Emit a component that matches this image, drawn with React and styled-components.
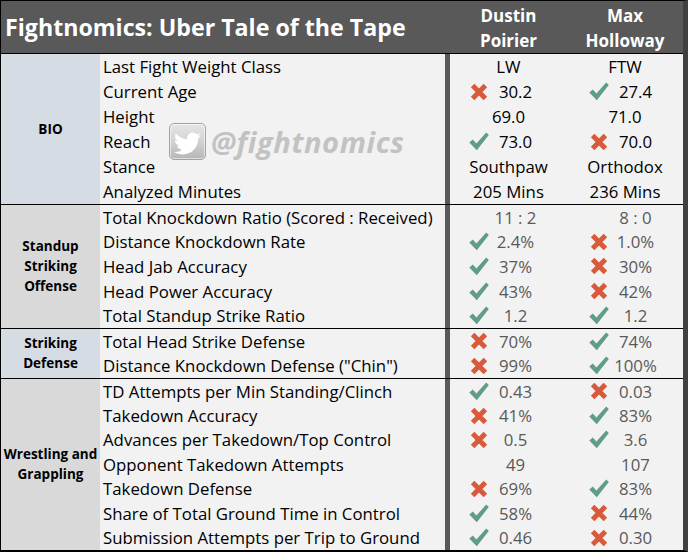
import React from 'react';
import styled, { createGlobalStyle } from 'styled-components';

const GlobalStyle = createGlobalStyle`
  html, body { margin: 0; padding: 0; background: #ffffff; }
  body { font-family: "Open Sans", "Liberation Sans", sans-serif; }
`;

const COLS = '99px 345px 5px 117px 116px';

const Sheet = styled.div`
  position: relative;
  width: 688px;
  box-sizing: border-box;
  border-top: 1px solid #000;
  border-left: 1px solid #000;
  border-bottom: 2px solid #000;
  border-right: 5px solid #404040;
  background: #f2f2f2;
`;

const Header = styled.div`
  display: grid;
  grid-template-columns: ${COLS};
  height: 52px;
  background: #595959;
  border-bottom: 1px solid #000;
  color: #ffffff;
`;

const Title = styled.div`
  grid-column: 1 / 4;
  display: flex;
  align-items: center;
  padding-left: 4px;
  font-weight: 700;
  font-size: 23.2px;
  white-space: nowrap;
`;

const PlayerName = styled.div`
  display: flex;
  flex-direction: column;
  align-items: center;
  justify-content: center;
  padding-top: 2px;
  font-weight: 700;
  font-size: 17px;
  line-height: 25px;
`;

const Section = styled.div`
  position: relative;
  display: grid;
  grid-template-columns: ${COLS};
  grid-auto-rows: ${p => p.$rowH}px;
  border-bottom: ${p => (p.$last ? 'none' : '1px solid #000')};
`;

const Category = styled.div`
  grid-column: 1;
  grid-row: 1 / span ${p => p.$span};
  background: ${p => p.$bg};
  display: flex;
  flex-direction: column;
  align-items: center;
  justify-content: center;
  font-weight: 700;
  font-size: 13.5px;
  line-height: 20px;
  color: #000;
  text-align: center;
`;

const Divider = styled.div`
  grid-column: 3;
  grid-row: 1 / span ${p => p.$span};
  background: #595959;
`;

const Label = styled.div`
  grid-column: 2;
  display: flex;
  align-items: center;
  padding-left: 3px;
  font-size: 16.8px;
  color: #000;
  white-space: nowrap;
`;

const Value = styled.div`
  grid-column: ${p => (p.$side === 'a' ? 4 : 5)};
  display: flex;
  align-items: center;
  justify-content: center;
  font-size: 16.8px;
  color: ${p => p.$tone};
  white-space: nowrap;
  padding-left: ${p => (p.$iconLayout ? (p.$side === 'a' ? 19 : 22) : 0)}px;
  padding-right: ${p => (p.$iconLayout ? (p.$side === 'a' ? 25 : 21) : 0)}px;
`;

const IconSlot = styled.span`
  width: 20px;
  height: 20px;
  flex: none;
  display: flex;
  align-items: center;
  justify-content: center;
`;

const ValueText = styled.span`
  flex: 1;
  text-align: center;
`;

const Watermark = styled.div`
  position: absolute;
  left: 168px;
  top: 69px;
  display: flex;
  align-items: center;
  gap: 5px;
  pointer-events: none;
`;

const BirdBox = styled.div`
  width: 37px;
  height: 37px;
  box-sizing: border-box;
  border-radius: 5px;
  border: 1px solid #a3a3a3;
  box-shadow: inset 0 0 0 1px rgba(255, 255, 255, 0.55);
  background: linear-gradient(#e6e6e6, #d2d2d2 50%, #b6b6b6);
  display: flex;
  align-items: center;
  justify-content: center;
  overflow: hidden;
`;

const Handle = styled.span`
  font-weight: 700;
  font-style: italic;
  font-size: 29px;
  line-height: 37px;
  color: #c2c2c2;
  letter-spacing: 0.6px;
`;

const Check = () => (
  <svg width="20" height="19" viewBox="0 0 20 19">
    <polygon points="0.3,10.5 3.8,7.6 7.4,11.6 17.2,0.6 19.8,3 7.8,18.3" fill="#5f9c89" />
  </svg>
);

const Cross = () => (
  <svg width="18" height="18" viewBox="0 0 18 18">
    <path d="M2.6 2.6 L15.4 15.4 M15.4 2.6 L2.6 15.4" stroke="#d95a3b" strokeWidth="5" strokeLinecap="butt" />
  </svg>
);

const Bird = () => (
  <svg width="27" height="23" viewBox="0 0 24 20" style={{ marginTop: 4, marginLeft: -1 }}>
    <path
      fill="#ffffff"
      d="M23.953 2.57a10 10 0 01-2.825.775 4.958 4.958 0 002.163-2.723c-.951.555-2.005.959-3.127 1.184a4.92 4.92 0 00-8.384 4.482C7.69 6.095 4.067 4.13 1.64 1.162a4.822 4.822 0 00-.666 2.475c0 1.71.87 3.213 2.188 4.096a4.904 4.904 0 01-2.228-.616v.06a4.923 4.923 0 003.946 4.827 4.996 4.996 0 01-2.212.085 4.936 4.936 0 004.604 3.417 9.867 9.867 0 01-6.102 2.105c-.39 0-.779-.023-1.170-.067a13.995 13.995 0 007.557 2.209c9.053 0 13.998-7.496 13.998-13.985 0-.21 0-.42-.015-.63A9.935 9.935 0 0024 2.59z"
    />
  </svg>
);

const sections = [
  {
    key: 'bio',
    name: ['BIO'],
    bg: '#d6dce4',
    tone: '#000000',
    iconSet: false,
    rowH: 25,
    rows: [
      ['Last Fight Weight Class', [null, 'LW'], [null, 'FTW']],
      ['Current Age', ['x', '30.2'], ['c', '27.4']],
      ['Height', [null, '69.0'], [null, '71.0']],
      ['Reach', ['c', '73.0'], ['x', '70.0']],
      ['Stance', [null, 'Southpaw'], [null, 'Orthodox']],
      ['Analyzed Minutes', [null, '205 Mins'], [null, '236 Mins']],
    ],
  },
  {
    key: 'standup',
    name: ['Standup', 'Striking', 'Offense'],
    bg: '#d9d9d9',
    tone: '#595959',
    iconSet: true,
    rowH: 24.6,
    rows: [
      ['Total Knockdown Ratio (Scored : Received)', [null, '11 : 2'], [null, '8 : 0']],
      ['Distance Knockdown Rate', ['c', '2.4%'], ['x', '1.0%']],
      ['Head Jab Accuracy', ['c', '37%'], ['x', '30%']],
      ['Head Power Accuracy', ['c', '43%'], ['x', '42%']],
      ['Total Standup Strike Ratio', ['c', '1.2'], ['c', '1.2']],
    ],
  },
  {
    key: 'defense',
    name: ['Striking', 'Defense'],
    bg: '#d6dce4',
    tone: '#595959',
    iconSet: true,
    rowH: 24.5,
    rows: [
      ['Total Head Strike Defense', ['x', '70%'], ['c', '74%']],
      ['Distance Knockdown Defense ("Chin")', ['x', '99%'], ['c', '100%']],
    ],
  },
  {
    key: 'wrestling',
    name: ['Wrestling and', 'Grappling'],
    bg: '#d9d9d9',
    tone: '#595959',
    iconSet: true,
    rowH: 24.4,
    rows: [
      ['TD Attempts per Min Standing/Clinch', ['c', '0.43'], ['x', '0.03']],
      ['Takedown Accuracy', ['x', '41%'], ['c', '83%']],
      ['Advances per Takedown/Top Control', ['x', '0.5'], ['c', '3.6']],
      ['Opponent Takedown Attempts', [null, '49'], [null, '107']],
      ['Takedown Defense', ['x', '69%'], ['c', '83%']],
      ['Share of Total Ground Time in Control', ['c', '58%'], ['x', '44%']],
      ['Submission Attempts per Trip to Ground', ['c', '0.46'], ['x', '0.30']],
    ],
  },
];

const Cell = ({ side, data, tone, iconSet }) => {
  const [icon, text] = data;
  const iconLayout = iconSet || icon !== null;
  return (
    <Value $side={side} $tone={tone} $iconLayout={iconLayout}>
      {iconLayout ? (
        <>
          <IconSlot>{icon === 'c' ? <Check /> : icon === 'x' ? <Cross /> : null}</IconSlot>
          <ValueText>{text}</ValueText>
        </>
      ) : (
        text
      )}
    </Value>
  );
};

export default function App() {
  return (
    <>
      <GlobalStyle />
      <Sheet>
        <Header>
          <Title>Fightnomics: Uber Tale of the Tape</Title>
          <PlayerName>
            <span>Dustin</span>
            <span>Poirier</span>
          </PlayerName>
          <PlayerName>
            <span>Max</span>
            <span>Holloway</span>
          </PlayerName>
        </Header>
        {sections.map((s, si) => (
          <Section key={s.key} $rowH={s.rowH} $last={si === sections.length - 1}>
            <Category $bg={s.bg} $span={s.rows.length}>
              {s.name.map(n => (
                <span key={n}>{n}</span>
              ))}
            </Category>
            <Divider $span={s.rows.length} />
            {s.rows.map(([label, a, b]) => (
              <React.Fragment key={label}>
                <Label>{label}</Label>
                <Cell side="a" data={a} tone={s.tone} iconSet={s.iconSet} />
                <Cell side="b" data={b} tone={s.tone} iconSet={s.iconSet} />
              </React.Fragment>
            ))}
            {si === 0 && (
              <Watermark>
                <BirdBox>
                  <Bird />
                </BirdBox>
                <Handle>@fightnomics</Handle>
              </Watermark>
            )}
          </Section>
        ))}
      </Sheet>
    </>
  );
}
